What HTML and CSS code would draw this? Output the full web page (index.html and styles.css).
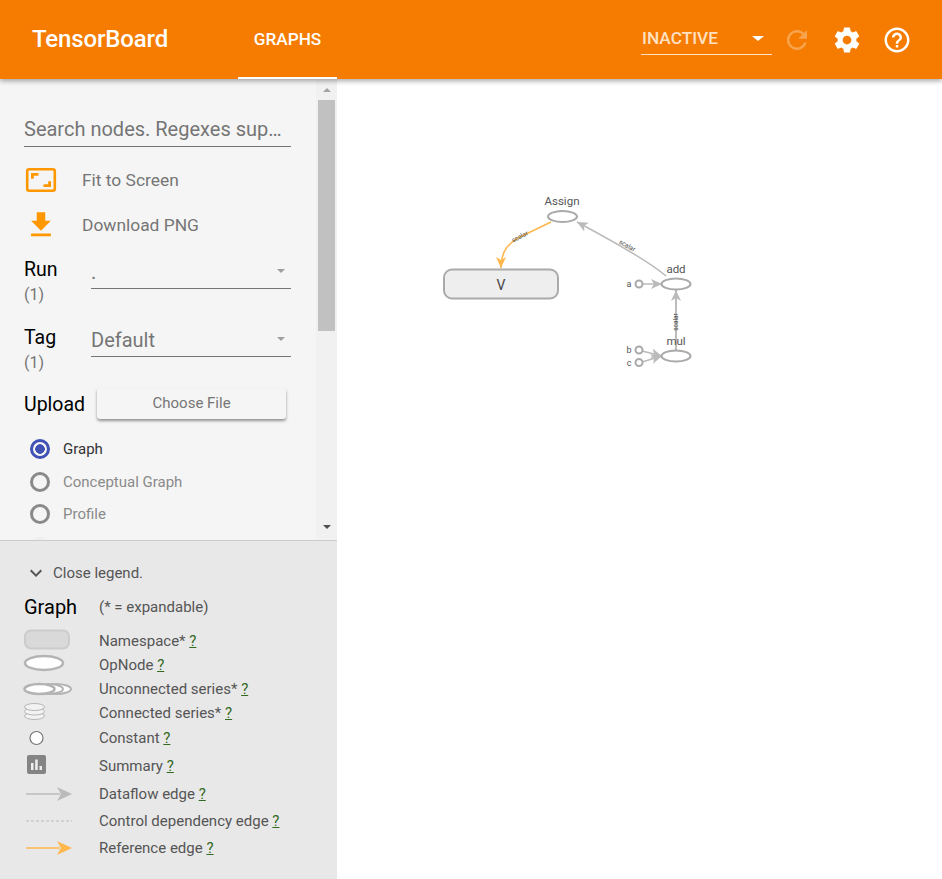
FILE: index.html
```html
<!DOCTYPE html>
<html lang="en">
<head>
<meta charset="UTF-8">
<meta name="viewport" content="width=device-width, initial-scale=1.0">
<title>TensorBoard</title>
<link rel="stylesheet" href="styles.css">
</head>
<body>

<header class="toolbar">
    <div class="logo">TensorBoard</div>
    <div class="tab">GRAPHS</div>
    <div class="spacer"></div>
    <div class="reload-select">
        <span>INACTIVE</span>
        <span class="caret caret-white"></span>
    </div>
    <svg class="top-icon top-icon-dim" viewBox="0 0 24 24"><path d="M17.65 6.35C16.2 4.9 14.21 4 12 4c-4.42 0-7.99 3.58-7.99 8s3.57 8 7.99 8c3.73 0 6.84-2.55 7.73-6h-2.08c-.82 2.33-3.04 4-5.65 4-3.31 0-6-2.69-6-6s2.69-6 6-6c1.66 0 3.14.69 4.22 1.78L13 11h7V4l-2.35 2.35z"/></svg>
    <svg class="top-icon" viewBox="0 0 24 24"><path d="M19.43 12.98c.04-.32.07-.64.07-.98s-.03-.66-.07-.98l2.11-1.65c.19-.15.24-.42.12-.64l-2-3.46c-.12-.22-.39-.3-.61-.22l-2.49 1c-.52-.4-1.08-.73-1.69-.98l-.38-2.65C14.46 2.18 14.25 2 14 2h-4c-.25 0-.46.18-.49.42l-.38 2.65c-.61.25-1.17.59-1.69.98l-2.49-1c-.23-.09-.49 0-.61.22l-2 3.46c-.13.22-.07.49.12.64l2.11 1.65c-.04.32-.07.65-.07.98s.03.66.07.98l-2.11 1.65c-.19.15-.24.42-.12.64l2 3.46c.12.22.39.3.61.22l2.49-1c.52.4 1.08.73 1.69.98l.38 2.65c.03.24.24.42.49.42h4c.25 0 .46-.18.49-.42l.38-2.65c.61-.25 1.17-.59 1.69-.98l2.49 1c.23.09.49 0 .61-.22l2-3.46c.12-.22.07-.49-.12-.64l-2.11-1.65zM12 15.5c-1.93 0-3.5-1.57-3.5-3.5s1.57-3.5 3.5-3.5 3.5 1.57 3.5 3.5-1.57 3.5-3.5 3.5z"/></svg>
    <svg class="top-icon" viewBox="0 0 24 24"><path d="M11 18h2v-2h-2v2zm1-16C6.48 2 2 6.48 2 12s4.48 10 10 10 10-4.48 10-10S17.52 2 12 2zm0 18c-4.41 0-8-3.59-8-8s3.59-8 8-8 8 3.59 8 8-3.59 8-8 8zm0-14c-2.21 0-4 1.79-4 4h2c0-1.1.9-2 2-2s2 .9 2 2c0 2-3 1.75-3 5h2c0-2.25 3-2.5 3-5 0-2.21-1.79-4-4-4z"/></svg>
</header>

<div class="main">
    <aside class="sidebar">
        <div class="controls">
            <div class="controls-body">
                <div class="search">Search nodes. Regexes sup…</div>

                <div class="tool">
                    <svg class="tool-icon" viewBox="0 0 34 34">
                        <rect x="3.2" y="6.2" width="27.6" height="21.6" rx="2" fill="none" stroke="#ff9800" stroke-width="2.6"/>
                        <path d="M7 10h7.5v2.8H9.800v3H7zM27 24h-7.500v-2.800h4.700v-3H27z" fill="#ff9800"/>
                    </svg>
                    <span>Fit to Screen</span>
                </div>
                <div class="tool">
                    <svg class="tool-icon" viewBox="0 0 24 24"><path d="M19 9h-4V3H9v6H5l7 7 7-7zM5 18v2h14v-2H5z" fill="#ff9800"/></svg>
                    <span>Download PNG</span>
                </div>

                <div class="field field-first">
                    <div>
                        <div class="field-label">Run</div>
                        <div class="field-count">(1)</div>
                    </div>
                    <div class="select">
                        <span>.</span>
                        <span class="caret"></span>
                    </div>
                </div>
                <div class="field">
                    <div>
                        <div class="field-label">Tag</div>
                        <div class="field-count">(1)</div>
                    </div>
                    <div class="select">
                        <span>Default</span>
                        <span class="caret"></span>
                    </div>
                </div>

                <div class="upload">
                    <div class="field-label upload-label">Upload</div>
                    <div class="upload-btn">Choose File</div>
                </div>

                <div class="radio-row radio-on"><span class="radio"></span>Graph</div>
                <div class="radio-row"><span class="radio"></span>Conceptual Graph</div>
                <div class="radio-row"><span class="radio"></span>Profile</div>
                <div class="radio-row radio-faint"><span class="radio"></span></div>
            </div>
            <div class="scrollbar">
                <div class="scroll-arrow scroll-up"></div>
                <div class="scroll-thumb"></div>
                <div class="scroll-arrow scroll-down"></div>
            </div>
        </div>

        <div class="legend">
            <div class="legend-toggle">
                <svg class="chevron" viewBox="0 0 24 24"><path d="M16.59 8.59L12 13.17 7.41 8.59 6 10l6 6 6-6z"/></svg>
                Close legend.
            </div>
            <div class="legend-head">
                <span class="legend-title">Graph</span>
                <span>(* = expandable)</span>
            </div>
            <div class="legend-table">
                <svg viewBox="0 0 50 24"><rect x="1" y="1.5" width="44" height="18" rx="6" fill="#d9d9d9" stroke="#ccc" stroke-width="2"/></svg>
                <div>Namespace* <a>?</a></div>

                <svg viewBox="0 0 50 24"><ellipse cx="20" cy="10" rx="19" ry="7" fill="#fff" stroke="#b4b4b4" stroke-width="2.5"/></svg>
                <div>OpNode <a>?</a></div>

                <svg viewBox="0 0 50 24">
                    <g fill="#fff" stroke="#b4b4b4" stroke-width="2">
                        <ellipse cx="32" cy="12" rx="15" ry="5"/>
                        <ellipse cx="24" cy="12" rx="15" ry="5"/>
                    </g>
                    <ellipse cx="15.5" cy="12" rx="15" ry="5" fill="#fff" stroke="#b4b4b4" stroke-width="2.5"/>
                </svg>
                <div>Unconnected series* <a>?</a></div>

                <svg viewBox="0 0 50 24">
                    <g fill="#f2f2f2" stroke="#b4b4b4">
                        <ellipse cx="10.5" cy="15" rx="10" ry="3.5"/>
                        <ellipse cx="10.5" cy="10.5" rx="10" ry="3.5"/>
                        <ellipse cx="10.5" cy="6" rx="10" ry="3.5"/>
                    </g>
                </svg>
                <div>Connected series* <a>?</a></div>

                <svg viewBox="0 0 50 26"><circle cx="12.5" cy="13" r="6.5" fill="#fff" stroke="#777" stroke-width="1.2"/></svg>
                <div>Constant <a>?</a></div>

                <svg viewBox="0 0 50 29">
                    <rect x="3" y="4" width="19" height="19" rx="2" fill="#848484"/>
                    <path d="M7 12h2.5v7H7zM11.200 8.500h2.500V19h-2.500zM15.500 15H18v4h-2.500z" fill="#eee"/>
                </svg>
                <div>Summary <a>?</a></div>

                <svg viewBox="0 0 50 27">
                    <path d="M2 14H36" stroke="#bbb" stroke-width="1.5"/>
                    <polygon points="33,7 48,14 33,21 37,14" fill="#bbb"/>
                </svg>
                <div>Dataflow edge <a>?</a></div>

                <svg viewBox="0 0 50 27"><path d="M2 14H48" stroke="#bbb" stroke-width="1" stroke-dasharray="3 2"/></svg>
                <div>Control dependency edge <a>?</a></div>

                <svg viewBox="0 0 50 27">
                    <path d="M2 14H36" stroke="#ffb74d" stroke-width="1.5"/>
                    <polygon points="33,7 48,14 33,21 37,14" fill="#ffb74d"/>
                </svg>
                <div>Reference edge <a>?</a></div>
            </div>
        </div>
    </aside>

    <!-- viewBox uses page coordinates so the nodes read straight off the screen -->
    <svg class="graph" viewBox="337 79 605 800">
        <defs>
            <marker id="arrowGray" markerUnits="userSpaceOnUse" markerWidth="12" markerHeight="10" refX="11" refY="5" orient="auto">
                <path d="M0,0 L11,5 L0,10 L3,5 Z" fill="#bbb"/>
            </marker>
            <marker id="arrowOrange" markerUnits="userSpaceOnUse" markerWidth="12" markerHeight="10" refX="11" refY="5" orient="auto">
                <path d="M0,0 L11,5 L0,10 L3,5 Z" fill="#ffb74d"/>
            </marker>
        </defs>

        <path class="edge edge-ref" d="M551 222 L522 236 C508 243 501 251 501 268" marker-end="url(#arrowOrange)"/>
        <path class="edge" d="M666 276 C650 262 620 245 577 222" marker-end="url(#arrowGray)"/>
        <path class="edge" d="M643 284 H662" marker-end="url(#arrowGray)"/>
        <path class="edge" d="M642 351 L662 356" marker-end="url(#arrowGray)"/>
        <path class="edge" d="M642 362 L662 356" marker-end="url(#arrowGray)"/>
        <path class="edge edge-thick" d="M676 351 V290" marker-end="url(#arrowGray)"/>

        <text class="edge-label" transform="translate(520 237) rotate(-27)">scalar</text>
        <text class="edge-label" transform="translate(627 246) rotate(29)">scalar</text>
        <text class="edge-label" transform="translate(676 322) rotate(-90)">scalar</text>

        <rect class="node-group" x="444" y="269.5" width="114" height="29" rx="8"/>
        <text class="group-label" x="501" y="290">V</text>

        <ellipse class="node" cx="562.5" cy="216.5" rx="14.5" ry="5.5"/>
        <ellipse class="node" cx="676" cy="284" rx="14.5" ry="5.5"/>
        <ellipse class="node" cx="676" cy="356" rx="14.5" ry="5.5"/>
        <text class="node-label" x="562" y="205">Assign</text>
        <text class="node-label" x="676" y="273">add</text>
        <text class="node-label" x="676" y="345">mul</text>

        <circle class="const" cx="639" cy="284" r="3.5"/>
        <circle class="const" cx="639" cy="350" r="3.5"/>
        <circle class="const" cx="639" cy="362.5" r="3.5"/>
        <text class="const-label" x="629" y="287">a</text>
        <text class="const-label" x="629" y="353">b</text>
        <text class="const-label" x="629" y="366">c</text>
    </svg>
</div>

</body>
</html>
```

FILE: styles.css
```css
html, body {
    height: 100%;
}
body {
    margin: 0;
    font-family: Roboto, "Noto Sans", sans-serif;
    overflow: hidden;
    display: flex;
    flex-direction: column;
    background-color: #fff;
}

/* top bar */
.toolbar {
    height: 79px;
    flex: none;
    display: flex;
    align-items: center;
    padding: 0 30px 0 32px;
    background-color: #f57c00;
    color: #fff;
    box-shadow: 0 2px 5px rgba(0, 0, 0, 0.35);
    position: relative;
    z-index: 2;
}
.logo {
    width: 206px;
    font-size: 24px;
    font-weight: 500;
    letter-spacing: -0.15px;
    margin-bottom: 1px;
}
.tab {
    width: 99px;
    height: 79px;
    box-sizing: border-box;
    padding-top: 29px;
    text-align: center;
    font-size: 17.2px;
    font-weight: 500;
    border-bottom: 2px solid #fff;
}
.spacer {
    flex: 1;
}
.reload-select {
    width: 131px;
    height: 33px;
    margin: 0 10px 2px 0;
    box-sizing: border-box;
    display: flex;
    align-items: center;
    justify-content: space-between;
    padding: 0 8px 0 1px;
    font-size: 17.3px;
    font-weight: 500;
    color: #ffe0c2;
    border-bottom: 1px solid #ffe0c2;
}
.top-icon {
    width: 30px;
    height: 30px;
    margin-left: 20px;
    fill: #fff;
}
.top-icon-dim {
    margin-left: 0;
    opacity: 0.3;
}

/* sidebar */
.main {
    flex: 1;
    display: flex;
    min-height: 0;
}
.sidebar {
    width: 337px;
    flex: none;
    display: flex;
    flex-direction: column;
}
.controls {
    height: 461px;
    flex: none;
    display: flex;
    overflow: hidden;
    background-color: #f5f5f5;
}
.controls-body {
    width: 316px;
    flex: none;
    box-sizing: border-box;
    padding: 32px 25px 0 24px;
    display: flex;
    flex-direction: column;
}
.search {
    height: 36px;
    flex: none;
    box-sizing: border-box;
    padding-top: 3px;
    font-size: 20px;
    line-height: 30px;
    color: #757575;
    border-bottom: 1px solid #757575;
    margin-bottom: 10px;
}
.tool {
    height: 45px;
    flex: none;
    display: flex;
    align-items: center;
    font-size: 17.4px;
    color: #757575;
}
.tool-icon {
    width: 34px;
    height: 34px;
    margin-right: 24px;
}
.field {
    height: 63px;
    flex: none;
    margin-top: 5px;
    display: flex;
    justify-content: space-between;
}
.field-first {
    margin-top: 10px;
}
.field-label {
    font-size: 19.5px;
    line-height: 26px;
    color: #000;
}
.field-count {
    font-size: 16px;
    line-height: 24px;
    color: #757575;
}
.select {
    width: 200px;
    height: 32px;
    box-sizing: border-box;
    display: flex;
    justify-content: space-between;
    padding: 0 6px 0 0;
    font-size: 20px;
    line-height: 30px;
    color: #757575;
    border-bottom: 1px solid #757575;
}
.caret {
    width: 0;
    height: 0;
    margin-top: 12px;
    border-left: 4px solid transparent;
    border-right: 4px solid transparent;
    border-top: 4px solid #9e9e9e;
}
.caret-white {
    margin-top: 0;
    border-left-width: 6px;
    border-right-width: 6px;
    border-top: 5px solid #fff;
}
.upload {
    height: 31px;
    flex: none;
    display: flex;
    align-items: center;
    gap: 12px;
    margin-bottom: 14px;
}
.upload-label {
    margin-top: 3px;
}
.upload-btn {
    width: 189px;
    height: 31px;
    line-height: 30px;
    text-align: center;
    font-size: 15px;
    color: #757575;
    background-color: #f5f5f5;
    border-radius: 3px;
    box-shadow: 0 2px 3px rgba(0, 0, 0, 0.4);
}
.radio-row {
    height: 32.5px;
    flex: none;
    display: flex;
    align-items: center;
    padding-left: 6px;
    font-size: 15px;
    color: #8a8a8a;
}
.radio {
    width: 20px;
    height: 20px;
    box-sizing: border-box;
    margin-right: 13px;
    border: 3px solid #8a8a8a;
    border-radius: 50%;
}
.radio-on {
    color: #333;
}
.radio-on .radio {
    border-color: #3f51b5;
    background: radial-gradient(circle, #3f51b5 0 4.5px, #f5f5f5 5px);
}
.radio-faint .radio {
    border-color: #eee;
}

/* scrollbar */
.scrollbar {
    flex: 1;
    display: flex;
    flex-direction: column;
    align-items: center;
    background-color: #f1f1f1;
}
.scroll-thumb {
    width: 17px;
    height: 231px;
    background-color: #c1c1c1;
}
.scroll-arrow {
    width: 0;
    height: 0;
    border-left: 4px solid transparent;
    border-right: 4px solid transparent;
}
.scroll-up {
    margin: 9px 0 8px;
    border-bottom: 4px solid #a3a3a3;
}
.scroll-down {
    margin-top: 194px;
    border-top: 4px solid #505050;
}

/* legend */
.legend {
    flex: 1;
    box-sizing: border-box;
    border-top: 1px solid #ccc;
    padding: 20px 0 0 24px;
    background-color: #e8e8e8;
    font-size: 15px;
    color: #555;
}
.legend-toggle {
    height: 24px;
    display: flex;
    align-items: center;
    gap: 5px;
}
.chevron {
    width: 24px;
    height: 24px;
    fill: #555;
}
.legend-head {
    height: 30px;
    margin: 7px 0 7px;
    display: flex;
    align-items: center;
}
.legend-title {
    width: 75px;
    font-size: 20px;
    color: #000;
}
.legend-table {
    display: grid;
    grid-template-columns: 75px 1fr;
    grid-template-rows: 24px 24px 24px 24px 26px 29px 27px 27px 27px;
    align-items: center;
}
.legend-table svg {
    width: 50px;
    height: 100%;
    overflow: visible;
}
.legend-table a {
    text-decoration: underline;
    color: #33691e;
}

/* graph */
.graph {
    flex: 1;
    min-width: 0;
    height: 100%;
    background-color: #fff;
}
.edge {
    fill: none;
    stroke: #bbb;
    stroke-width: 1.5;
}
.edge-thick {
    stroke-width: 2;
}
.edge-ref {
    stroke: #ffb74d;
}
.edge-label {
    font-size: 6.5px;
    fill: #444;
    text-anchor: middle;
    dominant-baseline: middle;
}
.node {
    fill: #fff;
    stroke: #aaa;
    stroke-width: 2;
}
.node-group {
    fill: #eee;
    stroke: #aaa;
    stroke-width: 2;
}
.group-label {
    font-size: 14px;
    fill: #444;
    text-anchor: middle;
}
.node-label {
    font-size: 11.5px;
    fill: #555;
    text-anchor: middle;
}
.const {
    fill: #fff;
    stroke: #aaa;
    stroke-width: 2;
}
.const-label {
    font-size: 9px;
    fill: #555;
    text-anchor: middle;
}
```
